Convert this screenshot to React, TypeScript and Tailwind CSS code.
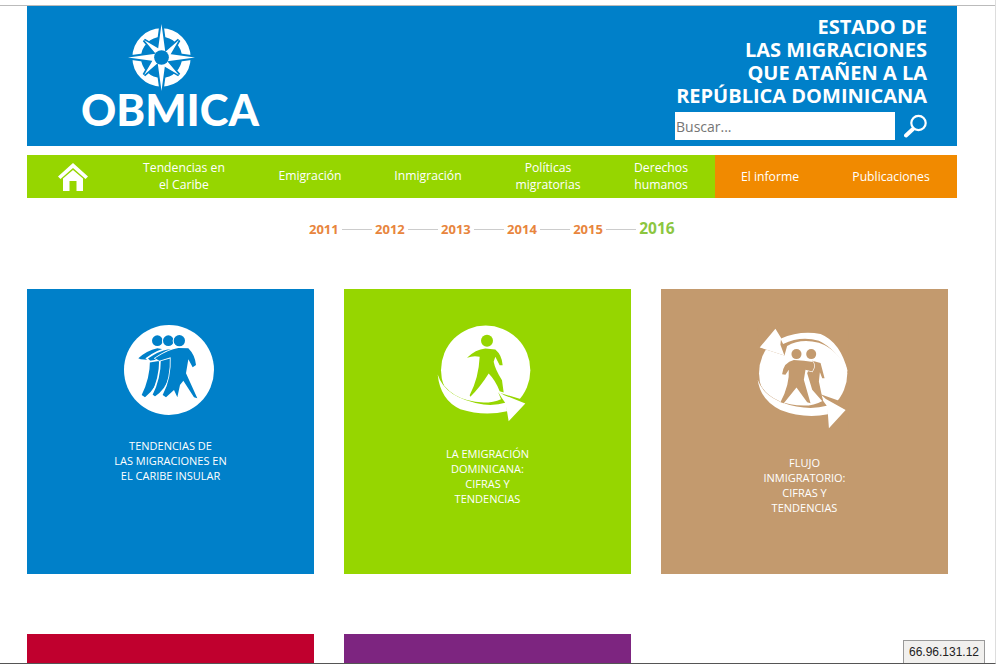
const years = ["2011", "2012", "2013", "2014", "2015"];

const navItems = [
  { label: ["Tendencias en", "el Caribe"], width: "w-[130px]" },
  { label: ["Emigración"], width: "w-[122px]" },
  { label: ["Inmigración"], width: "w-[114px]" },
  { label: ["Políticas", "migratorias"], width: "w-[126px]" },
  { label: ["Derechos", "humanos"], width: "w-[104px] pr-1" },
];

function Compass() {
  const long = "M50 0 L56 44 L100 50 L56 56 L50 100 L44 56 L0 50 L44 44 Z";
  const short = "M24 24 L55 42 L76 24 L58 55 L76 76 L45 58 L24 76 L42 45 Z";
  return (
    <svg viewBox="0 0 100 100" className="h-[67px] w-[67px]">
      <circle cx="50" cy="50" r="37" fill="none" stroke="#fff" strokeWidth="13" />
      <path d={long} fill="#0080c9" stroke="#0080c9" strokeWidth="6" />
      <path d={short} fill="#0080c9" stroke="#0080c9" strokeWidth="5" />
      <path d={short} fill="#fff" />
      <path d={long} fill="#fff" />
      <circle cx="50" cy="50" r="11" fill="#0080c9" />
    </svg>
  );
}

function HomeIcon() {
  return (
    <svg viewBox="0 0 30 28" className="h-[28px] w-[30px]" fill="#fff">
      <path d="M15 0 L30 13.5 L27.5 16 L15 5 L2.5 16 L0 13.5 Z" />
      <path d="M5 15.5 L15 7 L25 15.5 V28 H18.5 V18 H11.5 V28 H5 Z" />
    </svg>
  );
}

function SearchIcon() {
  return (
    <svg viewBox="0 0 24 24" className="h-6 w-6" fill="none" stroke="#fff">
      <circle cx="14.5" cy="9" r="7.2" strokeWidth="2.2" />
      <path d="M9 15 L2 21.5" strokeWidth="4" strokeLinecap="round" />
    </svg>
  );
}

function GroupIcon() {
  const c = "#0080c9";
  return (
    <svg viewBox="72 45 270 270" className="mr-[3px] h-[90px] w-[90px]">
      <circle cx="207" cy="180" r="135" fill="#fff" />
      <circle cx="172" cy="92" r="16" fill={c} />
      <path d="M115 145 Q140 122 172 115 L190 118 L178 190 Q170 235 135 262 L125 255 Q150 205 150 150 L122 148 Z" fill={c} />
      <circle cx="205" cy="92" r="19" fill="#fff" />
      <circle cx="205" cy="92" r="16" fill={c} />
      <path d="M140 145 Q175 120 205 115 L225 118 L212 195 Q200 240 165 262 L155 255 Q180 205 180 150 L150 155 Z" fill={c} stroke="#fff" strokeWidth="5" />
      <circle cx="238" cy="92" r="20" fill="#fff" />
      <circle cx="238" cy="92" r="17" fill={c} />
      <path d="M165 145 Q205 118 235 114 L265 115 Q285 135 288 165 L278 172 L265 148 L258 190 L292 265 L282 262 L250 212 L240 225 L232 262 L222 240 L198 262 L188 255 Q215 205 212 142 L178 152 Z" fill={c} stroke="#fff" strokeWidth="5" strokeLinejoin="round" paintOrder="stroke" />
    </svg>
  );
}

function EmigrationIcon() {
  const c = "#96d600";
  return (
    <svg viewBox="50 30 285 290" className="mr-[7px] h-[97px] w-[95px]">
      <circle cx="196" cy="165" r="134" fill="#fff" />
      <circle cx="200" cy="77" r="18" fill={c} />
      <path d="M140 128 Q165 103 195 100 L225 103 Q245 120 247 150 L238 150 L225 125 L220 140 Q225 165 245 195 L250 232 L238 228 Q225 195 205 175 Q180 215 150 245 L148 240 Q175 190 178 125 Q160 120 140 128 Z" fill={c} />
      <path d="M40 180 L52 178 Q85 258 190 262 Q220 262 242 252 L234 232 L335 262 L335 320 L40 320 Z" fill={c} />
      <path d="M52 178 Q75 250 190 268 Q225 272 258 262 L260 288 Q190 304 120 282 Q60 255 52 178 Z" fill="#fff" />
      <path d="M232 228 L252 240 L315 265 L265 318 L260 288 L254 262 L244 248 Z" fill="#fff" />
    </svg>
  );
}

function FlowIcon() {
  const c = "#c39a6e";
  return (
    <svg viewBox="50 40 275 305" className="mr-[4px] h-[102px] w-[92px]">
      <circle cx="188" cy="175" r="132" fill="#fff" />
      {/* gaps cut out of the disc by the two arrows */}
      <path d="M50 40 H325 V175 Q295 105 235 84 Q180 70 140 94 L132 122 L58 98 Z" fill={c} />
      <path d="M45 195 L52 195 Q85 270 190 272 Q220 272 246 258 L240 238 L325 268 V345 H45 Z" fill={c} />
      <path d="M120 72 Q180 46 240 58 Q300 82 322 172 Q290 105 235 78 Q180 62 128 88 Z" fill="#fff" />
      <path d="M105 42 L58 98 L132 122 L120 90 L122 70 Z" fill="#fff" />
      <path d="M52 195 Q75 262 190 278 Q225 282 262 272 L262 298 Q190 312 120 285 Q60 255 52 195 Z" fill="#fff" />
      <path d="M240 238 L256 252 L315 285 L265 340 L262 298 L258 272 L248 258 Z" fill="#fff" />
      <circle cx="212" cy="118" r="15" fill={c} />
      <path d="M215 138 L240 145 L252 190 L245 190 L238 172 L235 200 L248 262 L215 225 L200 175 Z" fill={c} />
      <circle cx="168" cy="118" r="15" fill={c} />
      <path d="M125 178 Q130 142 160 136 L190 138 L218 142 Q225 155 215 170 L195 165 L190 195 L210 265 L200 262 L168 218 L130 265 L120 262 Q148 210 145 165 L135 180 Z" fill={c} stroke="#fff" strokeWidth="4" paintOrder="stroke" />
    </svg>
  );
}

const cards = [
  {
    bg: "bg-[#0080c9]",
    pad: "pt-[36px]",
    gap: "mt-[23px]",
    icon: <GroupIcon />,
    lines: ["TENDENCIAS DE", "LAS MIGRACIONES EN", "EL CARIBE INSULAR"],
  },
  {
    bg: "bg-[#96d600]",
    pad: "pt-[36px]",
    gap: "mt-[24px]",
    icon: <EmigrationIcon />,
    lines: ["LA EMIGRACIÓN", "DOMINICANA:", "CIFRAS Y", "TENDENCIAS"],
  },
  {
    bg: "bg-[#c39a6e]",
    pad: "pt-[39px]",
    gap: "mt-[25px]",
    icon: <FlowIcon />,
    lines: ["FLUJO", "INMIGRATORIO:", "CIFRAS Y", "TENDENCIAS"],
  },
];

export default function App() {
  return (
    <div className="relative h-[664px] overflow-hidden border-r border-b border-r-[#ddd] border-b-[#555] bg-white font-['Open_Sans',sans-serif]">
      <div className="h-[6px] border-b border-[#bbb]" />

      <div className="ml-[27px] w-[930px]">
        <header className="flex h-[140px] justify-between bg-[#0080c9] text-white">
          <div className="flex w-[286px] flex-col items-center pt-[18px]">
            <div className="mr-[17px]">
              <Compass />
            </div>
            <div className="mt-[-4px] font-['Lato',sans-serif] text-[43.5px] leading-[45px] font-black">OBMICA</div>
          </div>
          <div className="flex flex-col items-end pt-[9px] pr-[30px]">
            <h1 className="text-right text-[20px] leading-[23px] font-bold">
              ESTADO DE
              <br />
              LAS MIGRACIONES
              <br />
              QUE ATAÑEN A LA
              <br />
              REPÚBLICA DOMINICANA
            </h1>
            <div className="mt-[5px] mr-[-1px] flex items-center gap-[9px]">
              <input
                placeholder="Buscar..."
                className="h-[28px] w-[220px] bg-white px-[1px] text-[14px] text-[#555] outline-none placeholder:text-[#757575]"
              />
              <SearchIcon />
            </div>
          </div>
        </header>

        <nav className="mt-[9px] flex h-[43px] text-center text-[12.2px] leading-[17px] text-white">
          <div className="flex flex-1 bg-[#96d600]">
            <a className="flex w-[92px] items-center justify-center">
              <HomeIcon />
            </a>
            {navItems.map((item) => (
              <a key={item.label[0]} className={`flex items-center justify-center ${item.width}`}>
                <span className="mt-[-2px]">
                  {item.label.map((line) => (
                    <span key={line} className="block">
                      {line}
                    </span>
                  ))}
                </span>
              </a>
            ))}
          </div>
          <div className="flex w-[242px] bg-[#f18a00]">
            <a className="flex w-[110px] items-center justify-center">El informe</a>
            <a className="flex w-[132px] items-center justify-center">Publicaciones</a>
          </div>
        </nav>

        <div className="mt-[20px] flex h-[22px] items-center pl-[282px] text-[13px] font-bold text-[#e8853d]">
          {years.map((year) => (
            <div key={year} className="flex items-center">
              <span className="mt-[1px]">{year}</span>
              <span className="mx-[3px] h-px w-[30.3px] bg-[#ccc]" />
            </div>
          ))}
          <span className="mt-[-1px] text-[15.5px] text-[#8cc63f]">2016</span>
        </div>

        <div className="mt-[49px] grid grid-cols-[287px_287px_287px] gap-x-[30px] gap-y-[60px]">
          {cards.map((card) => (
            <div key={card.lines[0]} className={`flex h-[285px] flex-col items-center text-center text-white ${card.bg} ${card.pad}`}>
              {card.icon}
              <div className={`text-[11px] leading-[15px] ${card.gap}`}>
                {card.lines.map((line) => (
                  <div key={line}>{line}</div>
                ))}
              </div>
            </div>
          ))}
          <div className="h-[285px] bg-[#c0002e]" />
          <div className="h-[285px] bg-[#7d2580]" />
        </div>
      </div>

      <div className="absolute right-[10px] bottom-[-1px] flex h-[24px] w-[82px] items-center justify-center border border-[#999] bg-[#f1f0ee] font-['Liberation_Sans',sans-serif] text-[12px] text-[#222]">
        66.96.131.12
      </div>
    </div>
  );
}
